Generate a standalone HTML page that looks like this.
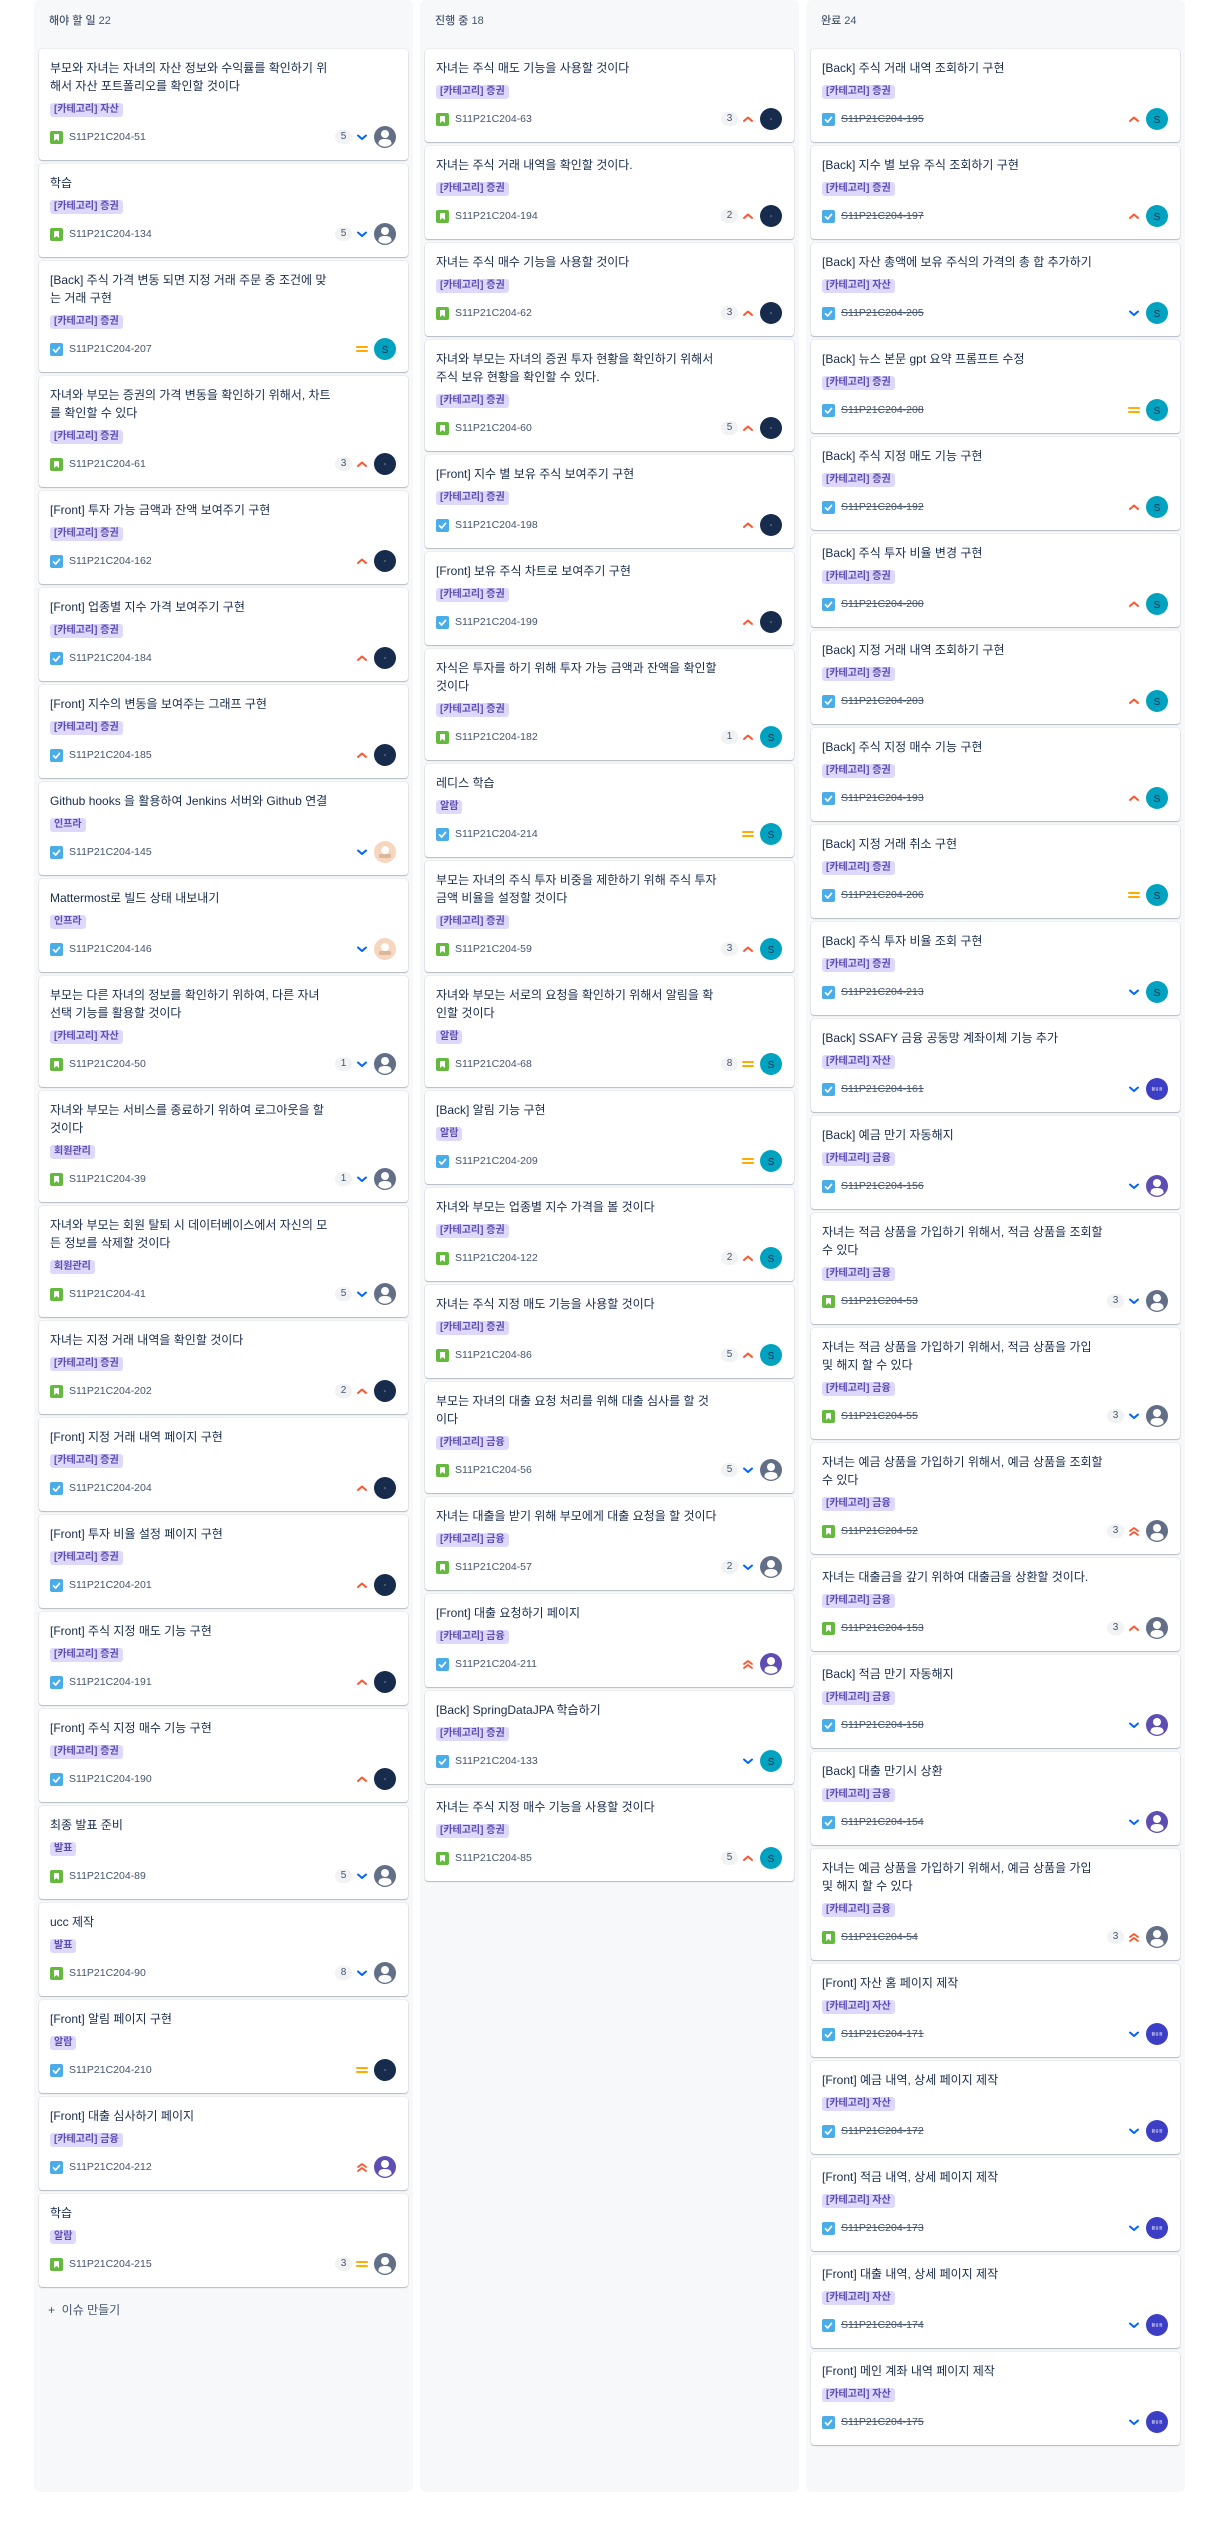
<!DOCTYPE html>
<html><head><meta charset="utf-8">
<style>
*{box-sizing:border-box;margin:0;padding:0}
body{width:1224px;height:2528px;background:#fff;font-family:"Liberation Sans","Noto Sans CJK KR",sans-serif;color:#172b4d;position:relative;overflow:hidden}
.col{position:absolute;top:0;width:379px;height:2492px;background:#f7f8f9;border-radius:6px}
.h{height:49px;padding:14px 0 0 15px;font-size:11px;line-height:14px;color:#44546f;font-weight:500}
.c{background:#fff;margin:0 5px 4px 5px;border-radius:3px;box-shadow:0 1px 1px rgba(9,30,66,.25),0 0 1px rgba(9,30,66,.31);padding:10px 12px 12px 11px}
.t{font-size:12px;line-height:18px;color:#172b4d;white-space:nowrap}
.l{display:table;margin-top:8px;height:14px;line-height:14px;font-size:10px;font-weight:700;color:#5e4db2;background:#dfd8fd;padding:0 4px;border-radius:3px}
.f{display:flex;align-items:center;margin-top:9px;height:22px}
.i{width:13px;height:13px;flex:none}
.k{margin-left:6px;font-size:10.5px;color:#44546f;flex:1}
.d .k{text-decoration:line-through}
.n{font-size:10px;color:#44546f;background:#f1f2f4;border-radius:8px;min-width:17px;height:14px;line-height:14px;text-align:center;margin-right:2px}
.p{width:16px;height:16px;margin-right:4px;flex:none}
.a{width:22px;height:22px;flex:none}
.add{padding:10px 0 0 14px;font-size:12px;color:#44546f}
</style></head><body>
<svg width="0" height="0" style="position:absolute">
<defs>
<symbol id="st" viewBox="0 0 13 13"><rect width="13" height="13" rx="2" fill="#63ba3c"/><path d="M4 3h5v7l-2.5-2L4 10z" fill="#fff"/></symbol>
<symbol id="tk" viewBox="0 0 13 13"><rect width="13" height="13" rx="2" fill="#4bade8"/><path d="M3.5 6.8l2.2 2.2 3.8-4.6" fill="none" stroke="#fff" stroke-width="1.7" stroke-linecap="round" stroke-linejoin="round"/></symbol>
<symbol id="hi" viewBox="0 0 16 16"><path d="M4 10l4-3.5 4 3.5" fill="none" stroke="#ff5630" stroke-width="2" stroke-linecap="round" stroke-linejoin="round"/></symbol>
<symbol id="lo" viewBox="0 0 16 16"><path d="M4 6.5l4 3.5 4-3.5" fill="none" stroke="#0065ff" stroke-width="2" stroke-linecap="round" stroke-linejoin="round"/></symbol>
<symbol id="me" viewBox="0 0 16 16"><path d="M3 6h10M3 10h10" stroke="#ffab00" stroke-width="2" stroke-linecap="round"/></symbol>
<symbol id="hh" viewBox="0 0 16 16"><path d="M4 8l4-3 4 3M4 12l4-3 4 3" fill="none" stroke="#ff5630" stroke-width="1.8" stroke-linecap="round" stroke-linejoin="round"/></symbol>
<symbol id="ag" viewBox="0 0 22 22"><circle cx="11" cy="11" r="11" fill="#626f86"/><circle cx="11" cy="8" r="4" fill="#fff"/><path d="M4.5 17.5c0-3 2-4.5 6.5-4.5s6.5 1.5 6.5 4.5v0.5a9 9 0 0 1-13 0z" fill="#fff"/></symbol>
<symbol id="ap" viewBox="0 0 22 22"><circle cx="11" cy="11" r="11" fill="#5e4db2"/><circle cx="11" cy="8" r="4" fill="#fff"/><path d="M4.5 17.5c0-3 2-4.5 6.5-4.5s6.5 1.5 6.5 4.5v0.5a9 9 0 0 1-13 0z" fill="#fff"/></symbol>
<symbol id="an" viewBox="0 0 22 22"><circle cx="11" cy="11" r="11" fill="#172b4d"/><circle cx="11" cy="11" r="0.8" fill="#8590a2"/></symbol>
<symbol id="at" viewBox="0 0 22 22"><circle cx="11" cy="11" r="11" fill="#00a3bf"/><text x="11" y="15" font-size="10" text-anchor="middle" fill="#172b4d" font-family="Liberation Sans">S</text></symbol>
<symbol id="ab" viewBox="0 0 22 22"><circle cx="11" cy="11" r="11" fill="#3c3fc6"/><text x="11" y="12.5" font-size="4" text-anchor="middle" fill="#fff" font-family="Noto Sans CJK KR">황유정</text></symbol>
<symbol id="ae" viewBox="0 0 22 22"><circle cx="11" cy="11" r="11" fill="#f8d5bf"/><circle cx="11" cy="9" r="4" fill="#fff"/><rect x="5" y="13" width="12" height="4" rx="1" fill="#d9b99a"/></symbol>
</defs></svg>

<div class="col" style="left:34px">
<div class="h">해야 할 일 22</div>
<div class="c"><div class="t">부모와 자녀는 자녀의 자산 정보와 수익률를 확인하기 위<br>해서 자산 포트폴리오를 확인할 것이다</div><span class="l">[카테고리] 자산</span><div class="f"><svg class="i"><use href="#st"/></svg><span class="k">S11P21C204-51</span><span class="n">5</span><svg class="p"><use href="#lo"/></svg><svg class="a"><use href="#ag"/></svg></div></div>
<div class="c"><div class="t">학습</div><span class="l">[카테고리] 증권</span><div class="f"><svg class="i"><use href="#st"/></svg><span class="k">S11P21C204-134</span><span class="n">5</span><svg class="p"><use href="#lo"/></svg><svg class="a"><use href="#ag"/></svg></div></div>
<div class="c"><div class="t">[Back] 주식 가격 변동 되면 지정 거래 주문 중 조건에 맞<br>는 거래 구현</div><span class="l">[카테고리] 증권</span><div class="f"><svg class="i"><use href="#tk"/></svg><span class="k">S11P21C204-207</span><svg class="p"><use href="#me"/></svg><svg class="a"><use href="#at"/></svg></div></div>
<div class="c"><div class="t">자녀와 부모는 증권의 가격 변동을 확인하기 위해서, 차트<br>를 확인할 수 있다</div><span class="l">[카테고리] 증권</span><div class="f"><svg class="i"><use href="#st"/></svg><span class="k">S11P21C204-61</span><span class="n">3</span><svg class="p"><use href="#hi"/></svg><svg class="a"><use href="#an"/></svg></div></div>
<div class="c"><div class="t">[Front] 투자 가능 금액과 잔액 보여주기 구현</div><span class="l">[카테고리] 증권</span><div class="f"><svg class="i"><use href="#tk"/></svg><span class="k">S11P21C204-162</span><svg class="p"><use href="#hi"/></svg><svg class="a"><use href="#an"/></svg></div></div>
<div class="c"><div class="t">[Front] 업종별 지수 가격 보여주기 구현</div><span class="l">[카테고리] 증권</span><div class="f"><svg class="i"><use href="#tk"/></svg><span class="k">S11P21C204-184</span><svg class="p"><use href="#hi"/></svg><svg class="a"><use href="#an"/></svg></div></div>
<div class="c"><div class="t">[Front] 지수의 변동을 보여주는 그래프 구현</div><span class="l">[카테고리] 증권</span><div class="f"><svg class="i"><use href="#tk"/></svg><span class="k">S11P21C204-185</span><svg class="p"><use href="#hi"/></svg><svg class="a"><use href="#an"/></svg></div></div>
<div class="c"><div class="t">Github hooks 을 활용하여 Jenkins 서버와 Github 연결</div><span class="l">인프라</span><div class="f"><svg class="i"><use href="#tk"/></svg><span class="k">S11P21C204-145</span><svg class="p"><use href="#lo"/></svg><svg class="a"><use href="#ae"/></svg></div></div>
<div class="c"><div class="t">Mattermost로 빌드 상태 내보내기</div><span class="l">인프라</span><div class="f"><svg class="i"><use href="#tk"/></svg><span class="k">S11P21C204-146</span><svg class="p"><use href="#lo"/></svg><svg class="a"><use href="#ae"/></svg></div></div>
<div class="c"><div class="t">부모는 다른 자녀의 정보를 확인하기 위하여, 다른 자녀<br>선택 기능를 활용할 것이다</div><span class="l">[카테고리] 자산</span><div class="f"><svg class="i"><use href="#st"/></svg><span class="k">S11P21C204-50</span><span class="n">1</span><svg class="p"><use href="#lo"/></svg><svg class="a"><use href="#ag"/></svg></div></div>
<div class="c"><div class="t">자녀와 부모는 서비스를 종료하기 위하여 로그아웃을 할<br>것이다</div><span class="l">회원관리</span><div class="f"><svg class="i"><use href="#st"/></svg><span class="k">S11P21C204-39</span><span class="n">1</span><svg class="p"><use href="#lo"/></svg><svg class="a"><use href="#ag"/></svg></div></div>
<div class="c"><div class="t">자녀와 부모는 회원 탈퇴 시 데이터베이스에서 자신의 모<br>든 정보를 삭제할 것이다</div><span class="l">회원관리</span><div class="f"><svg class="i"><use href="#st"/></svg><span class="k">S11P21C204-41</span><span class="n">5</span><svg class="p"><use href="#lo"/></svg><svg class="a"><use href="#ag"/></svg></div></div>
<div class="c"><div class="t">자녀는 지정 거래 내역을 확인할 것이다</div><span class="l">[카테고리] 증권</span><div class="f"><svg class="i"><use href="#st"/></svg><span class="k">S11P21C204-202</span><span class="n">2</span><svg class="p"><use href="#hi"/></svg><svg class="a"><use href="#an"/></svg></div></div>
<div class="c"><div class="t">[Front] 지정 거래 내역 페이지 구현</div><span class="l">[카테고리] 증권</span><div class="f"><svg class="i"><use href="#tk"/></svg><span class="k">S11P21C204-204</span><svg class="p"><use href="#hi"/></svg><svg class="a"><use href="#an"/></svg></div></div>
<div class="c"><div class="t">[Front] 투자 비율 설정 페이지 구현</div><span class="l">[카테고리] 증권</span><div class="f"><svg class="i"><use href="#tk"/></svg><span class="k">S11P21C204-201</span><svg class="p"><use href="#hi"/></svg><svg class="a"><use href="#an"/></svg></div></div>
<div class="c"><div class="t">[Front] 주식 지정 매도 기능 구현</div><span class="l">[카테고리] 증권</span><div class="f"><svg class="i"><use href="#tk"/></svg><span class="k">S11P21C204-191</span><svg class="p"><use href="#hi"/></svg><svg class="a"><use href="#an"/></svg></div></div>
<div class="c"><div class="t">[Front] 주식 지정 매수 기능 구현</div><span class="l">[카테고리] 증권</span><div class="f"><svg class="i"><use href="#tk"/></svg><span class="k">S11P21C204-190</span><svg class="p"><use href="#hi"/></svg><svg class="a"><use href="#an"/></svg></div></div>
<div class="c"><div class="t">최종 발표 준비</div><span class="l">발표</span><div class="f"><svg class="i"><use href="#st"/></svg><span class="k">S11P21C204-89</span><span class="n">5</span><svg class="p"><use href="#lo"/></svg><svg class="a"><use href="#ag"/></svg></div></div>
<div class="c"><div class="t">ucc 제작</div><span class="l">발표</span><div class="f"><svg class="i"><use href="#st"/></svg><span class="k">S11P21C204-90</span><span class="n">8</span><svg class="p"><use href="#lo"/></svg><svg class="a"><use href="#ag"/></svg></div></div>
<div class="c"><div class="t">[Front] 알림 페이지 구현</div><span class="l">알람</span><div class="f"><svg class="i"><use href="#tk"/></svg><span class="k">S11P21C204-210</span><svg class="p"><use href="#me"/></svg><svg class="a"><use href="#an"/></svg></div></div>
<div class="c"><div class="t">[Front] 대출 심사하기 페이지</div><span class="l">[카테고리] 금융</span><div class="f"><svg class="i"><use href="#tk"/></svg><span class="k">S11P21C204-212</span><svg class="p"><use href="#hh"/></svg><svg class="a"><use href="#ap"/></svg></div></div>
<div class="c"><div class="t">학습</div><span class="l">알람</span><div class="f"><svg class="i"><use href="#st"/></svg><span class="k">S11P21C204-215</span><span class="n">3</span><svg class="p"><use href="#me"/></svg><svg class="a"><use href="#ag"/></svg></div></div>
<div class="add">+&nbsp; 이슈 만들기</div>
</div>

<div class="col" style="left:420px">
<div class="h">진행 중 18</div>
<div class="c"><div class="t">자녀는 주식 매도 기능을 사용할 것이다</div><span class="l">[카테고리] 증권</span><div class="f"><svg class="i"><use href="#st"/></svg><span class="k">S11P21C204-63</span><span class="n">3</span><svg class="p"><use href="#hi"/></svg><svg class="a"><use href="#an"/></svg></div></div>
<div class="c"><div class="t">자녀는 주식 거래 내역을 확인할 것이다.</div><span class="l">[카테고리] 증권</span><div class="f"><svg class="i"><use href="#st"/></svg><span class="k">S11P21C204-194</span><span class="n">2</span><svg class="p"><use href="#hi"/></svg><svg class="a"><use href="#an"/></svg></div></div>
<div class="c"><div class="t">자녀는 주식 매수 기능을 사용할 것이다</div><span class="l">[카테고리] 증권</span><div class="f"><svg class="i"><use href="#st"/></svg><span class="k">S11P21C204-62</span><span class="n">3</span><svg class="p"><use href="#hi"/></svg><svg class="a"><use href="#an"/></svg></div></div>
<div class="c"><div class="t">자녀와 부모는 자녀의 증권 투자 현황을 확인하기 위해서<br>주식 보유 현황을 확인할 수 있다.</div><span class="l">[카테고리] 증권</span><div class="f"><svg class="i"><use href="#st"/></svg><span class="k">S11P21C204-60</span><span class="n">5</span><svg class="p"><use href="#hi"/></svg><svg class="a"><use href="#an"/></svg></div></div>
<div class="c"><div class="t">[Front] 지수 별 보유 주식 보여주기 구현</div><span class="l">[카테고리] 증권</span><div class="f"><svg class="i"><use href="#tk"/></svg><span class="k">S11P21C204-198</span><svg class="p"><use href="#hi"/></svg><svg class="a"><use href="#an"/></svg></div></div>
<div class="c"><div class="t">[Front] 보유 주식 차트로 보여주기 구현</div><span class="l">[카테고리] 증권</span><div class="f"><svg class="i"><use href="#tk"/></svg><span class="k">S11P21C204-199</span><svg class="p"><use href="#hi"/></svg><svg class="a"><use href="#an"/></svg></div></div>
<div class="c"><div class="t">자식은 투자를 하기 위해 투자 가능 금액과 잔액을 확인할<br>것이다</div><span class="l">[카테고리] 증권</span><div class="f"><svg class="i"><use href="#st"/></svg><span class="k">S11P21C204-182</span><span class="n">1</span><svg class="p"><use href="#hi"/></svg><svg class="a"><use href="#at"/></svg></div></div>
<div class="c"><div class="t">레디스 학습</div><span class="l">알람</span><div class="f"><svg class="i"><use href="#tk"/></svg><span class="k">S11P21C204-214</span><svg class="p"><use href="#me"/></svg><svg class="a"><use href="#at"/></svg></div></div>
<div class="c"><div class="t">부모는 자녀의 주식 투자 비중을 제한하기 위해 주식 투자<br>금액 비율을 설정할 것이다</div><span class="l">[카테고리] 증권</span><div class="f"><svg class="i"><use href="#st"/></svg><span class="k">S11P21C204-59</span><span class="n">3</span><svg class="p"><use href="#hi"/></svg><svg class="a"><use href="#at"/></svg></div></div>
<div class="c"><div class="t">자녀와 부모는 서로의 요청을 확인하기 위해서 알림을 확<br>인할 것이다</div><span class="l">알람</span><div class="f"><svg class="i"><use href="#st"/></svg><span class="k">S11P21C204-68</span><span class="n">8</span><svg class="p"><use href="#me"/></svg><svg class="a"><use href="#at"/></svg></div></div>
<div class="c"><div class="t">[Back] 알림 기능 구현</div><span class="l">알람</span><div class="f"><svg class="i"><use href="#tk"/></svg><span class="k">S11P21C204-209</span><svg class="p"><use href="#me"/></svg><svg class="a"><use href="#at"/></svg></div></div>
<div class="c"><div class="t">자녀와 부모는 업종별 지수 가격을 볼 것이다</div><span class="l">[카테고리] 증권</span><div class="f"><svg class="i"><use href="#st"/></svg><span class="k">S11P21C204-122</span><span class="n">2</span><svg class="p"><use href="#hi"/></svg><svg class="a"><use href="#at"/></svg></div></div>
<div class="c"><div class="t">자녀는 주식 지정 매도 기능을 사용할 것이다</div><span class="l">[카테고리] 증권</span><div class="f"><svg class="i"><use href="#st"/></svg><span class="k">S11P21C204-86</span><span class="n">5</span><svg class="p"><use href="#hi"/></svg><svg class="a"><use href="#at"/></svg></div></div>
<div class="c"><div class="t">부모는 자녀의 대출 요청 처리를 위해 대출 심사를 할 것<br>이다</div><span class="l">[카테고리] 금융</span><div class="f"><svg class="i"><use href="#st"/></svg><span class="k">S11P21C204-56</span><span class="n">5</span><svg class="p"><use href="#lo"/></svg><svg class="a"><use href="#ag"/></svg></div></div>
<div class="c"><div class="t">자녀는 대출을 받기 위해 부모에게 대출 요청을 할 것이다</div><span class="l">[카테고리] 금융</span><div class="f"><svg class="i"><use href="#st"/></svg><span class="k">S11P21C204-57</span><span class="n">2</span><svg class="p"><use href="#lo"/></svg><svg class="a"><use href="#ag"/></svg></div></div>
<div class="c"><div class="t">[Front] 대출 요청하기 페이지</div><span class="l">[카테고리] 금융</span><div class="f"><svg class="i"><use href="#tk"/></svg><span class="k">S11P21C204-211</span><svg class="p"><use href="#hh"/></svg><svg class="a"><use href="#ap"/></svg></div></div>
<div class="c"><div class="t">[Back] SpringDataJPA 학습하기</div><span class="l">[카테고리] 증권</span><div class="f"><svg class="i"><use href="#tk"/></svg><span class="k">S11P21C204-133</span><svg class="p"><use href="#lo"/></svg><svg class="a"><use href="#at"/></svg></div></div>
<div class="c"><div class="t">자녀는 주식 지정 매수 기능을 사용할 것이다</div><span class="l">[카테고리] 증권</span><div class="f"><svg class="i"><use href="#st"/></svg><span class="k">S11P21C204-85</span><span class="n">5</span><svg class="p"><use href="#hi"/></svg><svg class="a"><use href="#at"/></svg></div></div>
</div>

<div class="col" style="left:806px">
<div class="h">완료 24</div>
<div class="c d"><div class="t">[Back] 주식 거래 내역 조회하기 구현</div><span class="l">[카테고리] 증권</span><div class="f"><svg class="i"><use href="#tk"/></svg><span class="k">S11P21C204-195</span><svg class="p"><use href="#hi"/></svg><svg class="a"><use href="#at"/></svg></div></div>
<div class="c d"><div class="t">[Back] 지수 별 보유 주식 조회하기 구현</div><span class="l">[카테고리] 증권</span><div class="f"><svg class="i"><use href="#tk"/></svg><span class="k">S11P21C204-197</span><svg class="p"><use href="#hi"/></svg><svg class="a"><use href="#at"/></svg></div></div>
<div class="c d"><div class="t">[Back] 자산 총액에 보유 주식의 가격의 총 합 추가하기</div><span class="l">[카테고리] 자산</span><div class="f"><svg class="i"><use href="#tk"/></svg><span class="k">S11P21C204-205</span><svg class="p"><use href="#lo"/></svg><svg class="a"><use href="#at"/></svg></div></div>
<div class="c d"><div class="t">[Back] 뉴스 본문 gpt 요약 프롬프트 수정</div><span class="l">[카테고리] 증권</span><div class="f"><svg class="i"><use href="#tk"/></svg><span class="k">S11P21C204-208</span><svg class="p"><use href="#me"/></svg><svg class="a"><use href="#at"/></svg></div></div>
<div class="c d"><div class="t">[Back] 주식 지정 매도 기능 구현</div><span class="l">[카테고리] 증권</span><div class="f"><svg class="i"><use href="#tk"/></svg><span class="k">S11P21C204-192</span><svg class="p"><use href="#hi"/></svg><svg class="a"><use href="#at"/></svg></div></div>
<div class="c d"><div class="t">[Back] 주식 투자 비율 변경 구현</div><span class="l">[카테고리] 증권</span><div class="f"><svg class="i"><use href="#tk"/></svg><span class="k">S11P21C204-200</span><svg class="p"><use href="#hi"/></svg><svg class="a"><use href="#at"/></svg></div></div>
<div class="c d"><div class="t">[Back] 지정 거래 내역 조회하기 구현</div><span class="l">[카테고리] 증권</span><div class="f"><svg class="i"><use href="#tk"/></svg><span class="k">S11P21C204-203</span><svg class="p"><use href="#hi"/></svg><svg class="a"><use href="#at"/></svg></div></div>
<div class="c d"><div class="t">[Back] 주식 지정 매수 기능 구현</div><span class="l">[카테고리] 증권</span><div class="f"><svg class="i"><use href="#tk"/></svg><span class="k">S11P21C204-193</span><svg class="p"><use href="#hi"/></svg><svg class="a"><use href="#at"/></svg></div></div>
<div class="c d"><div class="t">[Back] 지정 거래 취소 구현</div><span class="l">[카테고리] 증권</span><div class="f"><svg class="i"><use href="#tk"/></svg><span class="k">S11P21C204-206</span><svg class="p"><use href="#me"/></svg><svg class="a"><use href="#at"/></svg></div></div>
<div class="c d"><div class="t">[Back] 주식 투자 비율 조회 구현</div><span class="l">[카테고리] 증권</span><div class="f"><svg class="i"><use href="#tk"/></svg><span class="k">S11P21C204-213</span><svg class="p"><use href="#lo"/></svg><svg class="a"><use href="#at"/></svg></div></div>
<div class="c d"><div class="t">[Back] SSAFY 금융 공동망 계좌이체 기능 추가</div><span class="l">[카테고리] 자산</span><div class="f"><svg class="i"><use href="#tk"/></svg><span class="k">S11P21C204-161</span><svg class="p"><use href="#lo"/></svg><svg class="a"><use href="#ab"/></svg></div></div>
<div class="c d"><div class="t">[Back] 예금 만기 자동해지</div><span class="l">[카테고리] 금융</span><div class="f"><svg class="i"><use href="#tk"/></svg><span class="k">S11P21C204-156</span><svg class="p"><use href="#lo"/></svg><svg class="a"><use href="#ap"/></svg></div></div>
<div class="c d"><div class="t">자녀는 적금 상품을 가입하기 위해서, 적금 상품을 조회할<br>수 있다</div><span class="l">[카테고리] 금융</span><div class="f"><svg class="i"><use href="#st"/></svg><span class="k">S11P21C204-53</span><span class="n">3</span><svg class="p"><use href="#lo"/></svg><svg class="a"><use href="#ag"/></svg></div></div>
<div class="c d"><div class="t">자녀는 적금 상품을 가입하기 위해서, 적금 상품을 가입<br>및 해지 할 수 있다</div><span class="l">[카테고리] 금융</span><div class="f"><svg class="i"><use href="#st"/></svg><span class="k">S11P21C204-55</span><span class="n">3</span><svg class="p"><use href="#lo"/></svg><svg class="a"><use href="#ag"/></svg></div></div>
<div class="c d"><div class="t">자녀는 예금 상품을 가입하기 위해서, 예금 상품을 조회할<br>수 있다</div><span class="l">[카테고리] 금융</span><div class="f"><svg class="i"><use href="#st"/></svg><span class="k">S11P21C204-52</span><span class="n">3</span><svg class="p"><use href="#hh"/></svg><svg class="a"><use href="#ag"/></svg></div></div>
<div class="c d"><div class="t">자녀는 대출금을 갚기 위하여 대출금을 상환할 것이다.</div><span class="l">[카테고리] 금융</span><div class="f"><svg class="i"><use href="#st"/></svg><span class="k">S11P21C204-153</span><span class="n">3</span><svg class="p"><use href="#hi"/></svg><svg class="a"><use href="#ag"/></svg></div></div>
<div class="c d"><div class="t">[Back] 적금 만기 자동해지</div><span class="l">[카테고리] 금융</span><div class="f"><svg class="i"><use href="#tk"/></svg><span class="k">S11P21C204-158</span><svg class="p"><use href="#lo"/></svg><svg class="a"><use href="#ap"/></svg></div></div>
<div class="c d"><div class="t">[Back] 대출 만기시 상환</div><span class="l">[카테고리] 금융</span><div class="f"><svg class="i"><use href="#tk"/></svg><span class="k">S11P21C204-154</span><svg class="p"><use href="#lo"/></svg><svg class="a"><use href="#ap"/></svg></div></div>
<div class="c d"><div class="t">자녀는 예금 상품을 가입하기 위해서, 예금 상품을 가입<br>및 해지 할 수 있다</div><span class="l">[카테고리] 금융</span><div class="f"><svg class="i"><use href="#st"/></svg><span class="k">S11P21C204-54</span><span class="n">3</span><svg class="p"><use href="#hh"/></svg><svg class="a"><use href="#ag"/></svg></div></div>
<div class="c d"><div class="t">[Front] 자산 홈 페이지 제작</div><span class="l">[카테고리] 자산</span><div class="f"><svg class="i"><use href="#tk"/></svg><span class="k">S11P21C204-171</span><svg class="p"><use href="#lo"/></svg><svg class="a"><use href="#ab"/></svg></div></div>
<div class="c d"><div class="t">[Front] 예금 내역, 상세 페이지 제작</div><span class="l">[카테고리] 자산</span><div class="f"><svg class="i"><use href="#tk"/></svg><span class="k">S11P21C204-172</span><svg class="p"><use href="#lo"/></svg><svg class="a"><use href="#ab"/></svg></div></div>
<div class="c d"><div class="t">[Front] 적금 내역, 상세 페이지 제작</div><span class="l">[카테고리] 자산</span><div class="f"><svg class="i"><use href="#tk"/></svg><span class="k">S11P21C204-173</span><svg class="p"><use href="#lo"/></svg><svg class="a"><use href="#ab"/></svg></div></div>
<div class="c d"><div class="t">[Front] 대출 내역, 상세 페이지 제작</div><span class="l">[카테고리] 자산</span><div class="f"><svg class="i"><use href="#tk"/></svg><span class="k">S11P21C204-174</span><svg class="p"><use href="#lo"/></svg><svg class="a"><use href="#ab"/></svg></div></div>
<div class="c d"><div class="t">[Front] 메인 계좌 내역 페이지 제작</div><span class="l">[카테고리] 자산</span><div class="f"><svg class="i"><use href="#tk"/></svg><span class="k">S11P21C204-175</span><svg class="p"><use href="#lo"/></svg><svg class="a"><use href="#ab"/></svg></div></div>
</div>
</body></html>
